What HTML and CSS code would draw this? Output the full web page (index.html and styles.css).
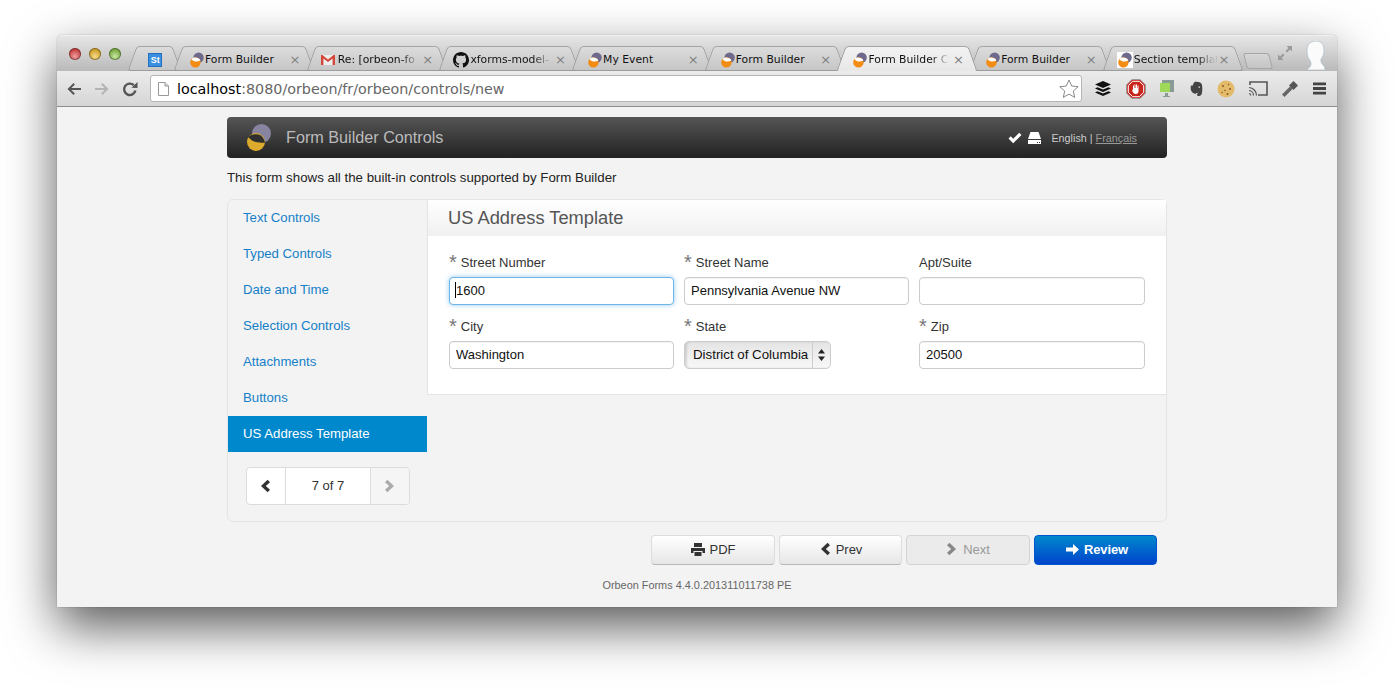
FILE: index.html
```html
<!DOCTYPE html>
<html lang="en">
<head>
    <meta charset="UTF-8">
    <meta name="viewport" content="width=device-width, initial-scale=1.0">
    <title>Form Builder Controls</title>
    <link rel="stylesheet" href="styles.css">
</head>
<body>
    <svg class="defs" width="0" height="0">
        <symbol id="orbeon" viewBox="0 0 14 16">
            <circle cx="8.6" cy="5.6" r="5.2" fill="#6f6a8c"/>
            <circle cx="5.4" cy="10.4" r="5.2" fill="#f28c13"/>
            <path d="M1.6 7.2 C3.4 9.6 7 10.4 10.4 8.4 C9.4 6.4 7 5.4 4.6 5.6 C3.2 5.8 2.2 6.4 1.6 7.2Z" fill="#fff"/>
        </symbol>
        <symbol id="chev-left" viewBox="0 0 12 14"><path d="M8.6 0.8 L11 3.2 L6.8 7 L11 10.8 L8.6 13.2 L2 7Z"/></symbol>
        <symbol id="chev-right" viewBox="0 0 12 14"><path d="M3.4 0.8 L1 3.2 L5.2 7 L1 10.8 L3.4 13.2 L10 7Z"/></symbol>
    </svg>

    <div class="window">
        <div class="titlebar">
            <div class="lights">
                <span class="light red"></span>
                <span class="light yellow"></span>
                <span class="light green"></span>
            </div>
            <div class="tabs">
                <div class="tab pinned"><span class="fav-st">St</span></div>
                <div class="tab">
                    <svg class="fav"><use href="#orbeon"/></svg>
                    <span class="tab-label">Form Builder</span><span class="tab-x">×</span>
                </div>
                <div class="tab">
                    <svg class="fav gmail" viewBox="0 0 14 14"><path d="M0 2h14v10h-14z" fill="#eee"/><path d="M0 2v10h2.4V5.4L7 9l4.6-3.6V12H14V2h-1.4L7 6.6 1.4 2z" fill="#d44638"/></svg>
                    <span class="tab-label fade">Re: [orbeon-fo</span><span class="tab-x">×</span>
                </div>
                <div class="tab">
                    <svg class="fav big" viewBox="0 0 16 16"><path d="M8 0C3.6 0 0 3.6 0 8c0 3.5 2.3 6.5 5.5 7.6.4.1.5-.2.5-.4v-1.4c-2.2.5-2.7-1-2.7-1-.4-.9-.9-1.200-.9-1.200-.7-.5.100-.5.100-.5.800.1 1.200.8 1.200.8.700 1.200 1.900.9 2.300.7.100-.5.300-.9.500-1.100-1.800-.2-3.600-.9-3.600-4 0-.9.300-1.600.800-2.100-.1-.2-.4-1 .1-2.100 0 0 .7-.2 2.200.8.600-.2 1.300-.3 2-.3s1.400.1 2 .3c1.500-1 2.200-.8 2.200-.8.400 1.100.2 1.900.1 2.100.5.600.8 1.300.8 2.100 0 3.100-1.900 3.700-3.700 3.900.3.300.6.800.6 1.500v2.200c0 .2.100.5.600.4C13.700 14.500 16 11.500 16 8c0-4.400-3.600-8-8-8z" fill="#111"/></svg>
                    <span class="tab-label fade">xforms-model-</span><span class="tab-x">×</span>
                </div>
                <div class="tab">
                    <svg class="fav"><use href="#orbeon"/></svg>
                    <span class="tab-label">My Event</span><span class="tab-x">×</span>
                </div>
                <div class="tab">
                    <svg class="fav"><use href="#orbeon"/></svg>
                    <span class="tab-label">Form Builder</span><span class="tab-x">×</span>
                </div>
                <div class="tab active">
                    <svg class="fav"><use href="#orbeon"/></svg>
                    <span class="tab-label fade">Form Builder C</span><span class="tab-x">×</span>
                </div>
                <div class="tab">
                    <svg class="fav"><use href="#orbeon"/></svg>
                    <span class="tab-label">Form Builder</span><span class="tab-x">×</span>
                </div>
                <div class="tab">
                    <svg class="fav big white"><use href="#orbeon"/></svg>
                    <span class="tab-label fade">Section templat</span><span class="tab-x">×</span>
                </div>
                <div class="new-tab"></div>
            </div>
            <svg class="fullscreen" viewBox="0 0 16 16" width="16" height="16">
                <path d="M1 15V9.500L3 11.500 6 8.500 7.500 10 4.500 13 6.500 15Z M15 1V6.500L13 4.500 10 7.500 8.500 6 11.500 3 9.500 1Z" fill="#9a9a9a"/>
            </svg>
            <svg class="profile" viewBox="0 0 20 29" width="20" height="29">
                <path d="M2 9C2 3 6 0 11 0C16 0 19 3 19 9C19 13 18 16 16 18C15.600 20 16 22 19 25C20 26 20 29 20 29H2C3 27 6 26 6 23C6 21 5.500 20 4 18C2.500 16 2 13 2 9Z" fill="#fbfbfb" stroke="#a9bcc6" stroke-width="0.7"/>
            </svg>
        </div>

        <div class="toolbar">
            <svg class="nav-btn" viewBox="0 0 16 14" width="16" height="14"><path d="M7.500 1L1.500 7l6 6 1.400-1.400L5.300 8H15V6H5.300l3.600-3.600z" fill="#555"/></svg>
            <svg class="nav-btn" viewBox="0 0 16 14" width="16" height="14"><path d="M8.500 1l6 6-6 6-1.400-1.400L10.700 8H1V6h9.700L7.100 2.400z" fill="#b4b4b4"/></svg>
            <svg class="nav-btn" viewBox="0 0 16 16" width="16" height="16"><path d="M13.400 9.500A5.700 5.700 0 1 1 11.800 4.200" fill="none" stroke="#555" stroke-width="2.400"/><path d="M9.500 6.800L15.500 7V1z" fill="#555"/></svg>
            <div class="location">
                <svg viewBox="0 0 11 14" width="11" height="14"><path d="M.5.500h6.500l3.500 3.500v9.500H.5z" fill="#fff" stroke="#999"/><path d="M7 .500V4h3.500" fill="#ddd" stroke="#999"/></svg>
                <span class="url"><b>localhost</b>:8080/orbeon/fr/orbeon/controls/new</span>
                <svg class="star" viewBox="0 0 20 19" width="20" height="19"><path d="M10 1l2.700 6 6.500.7-4.900 4.300 1.400 6.400L10 15.100l-5.700 3.300 1.400-6.400L.8 7.700l6.500-.7z" fill="#fff" stroke="#8a8a8a"/></svg>
            </div>
            <div class="extensions">
                <svg viewBox="0 0 18 18" width="18" height="18"><path d="M9 1l8 3.500-8 3.500-8-3.500z M3.500 7.200L9 9.600l5.500-2.400L17 8.400 9 12 1 8.400z M3.500 11.200L9 13.600l5.500-2.400L17 12.400 9 16 1 12.400z" fill="#111"/></svg>
                <svg viewBox="0 0 20 20" width="20" height="20"><path d="M6 .500h8L19.500 6v8L14 19.500H6L.500 14V6z" fill="#c8261c" stroke="#999"/><path d="M6.700 2.300h6.600l4.400 4.400v6.600l-4.400 4.400H6.700l-4.400-4.400V6.700z" fill="none" stroke="#fff"/><path d="M7 10V6.500h1V9h.5V5.500h1V9h.5V5.500h1V9h.5V6.500h1V12c0 2-1 3-3 3-1.500 0-2-1-3-2.500L6 10.500l1 .5z" fill="#fff"/></svg>
                <svg viewBox="0 0 17 20" width="17" height="20"><path d="M3 1h12v12H3z" fill="#8a9a94"/><path d="M1 4h10v9H1z" fill="#9fd95a"/><path d="M6 14h3v3H6zM4 17h7v1H4z" fill="#8a9a94"/></svg>
                <svg viewBox="0 0 13 16" width="13" height="16"><path d="M3 2.500L5 .800c3.500-.3 6.500.2 7 3.200.500 3 .500 7-.5 9.500-1 1.800-4 2-4.500.5-.2-1 .3-2 1.500-1.800-1-.5-2.500-.2-3 .8C3.500 12 1 11.500.700 7.500c0-1 0-2.500.3-3h2z" fill="#444"/><path d="M3.400 3.300V1.600L1.700 3.300z M8.500 5.500h1.500v1.200H8.500z" fill="#ddd"/></svg>
                <svg viewBox="0 0 18 18" width="18" height="18"><circle cx="9" cy="9" r="8.500" fill="#e4bb6a"/><circle cx="6" cy="6" r="1" fill="#8a5a24"/><circle cx="11.500" cy="4.500" r=".8" fill="#8a5a24"/><circle cx="13" cy="9" r="1" fill="#8a5a24"/><circle cx="8" cy="10.500" r=".8" fill="#8a5a24"/><circle cx="5" cy="12.500" r=".8" fill="#8a5a24"/><circle cx="10.500" cy="14" r="1" fill="#8a5a24"/></svg>
                <svg viewBox="0 0 19 15" width="19" height="15"><path d="M1 4V1h17v13H9" fill="none" stroke="#555" stroke-width="1.600"/><path d="M0 6.500a8 8 0 0 1 7.500 8M0 9.500a5 5 0 0 1 4.500 5M0 12.500a2 2 0 0 1 1.800 2" fill="none" stroke="#555" stroke-width="1.200"/></svg>
                <svg viewBox="0 0 18 18" width="18" height="18"><path d="M9 6.500L1 14.500 3.500 17l8-8z" fill="#666"/><path d="M8 5.500L12.500 1 17 5.500 12.500 10z" fill="#555"/></svg>
                <svg viewBox="0 0 13 13" width="13" height="13"><path d="M0 .500h13v2.800H0zM0 5.100h13v2.800H0zM0 9.700h13v2.800H0z" fill="#444"/></svg>
            </div>
        </div>

        <div class="page">
            <div class="app-bar">
                <svg class="app-logo" viewBox="0 0 24 27" width="24" height="27">
                    <circle cx="14.500" cy="9.500" r="9.500" fill="#88849f"/>
                    <circle cx="9" cy="18" r="9" fill="#dcaa2c"/>
                    <path d="M1.300 13 C4 10 10 9.500 14 11.500 C16 13 17.500 16 18 18.500 C12 19.500 5 18 1.300 13Z" fill="#2f2f2f"/>
                </svg>
                <span class="app-title">Form Builder Controls</span>
                <svg class="bar-icon" viewBox="0 0 14 12" width="14" height="12"><path d="M0.500 6.500L2.800 4.300 5.200 6.700 11.200 .700 13.500 3 5.200 11.300z" fill="#fff"/></svg>
                <svg class="bar-icon" viewBox="0 0 13 12" width="13" height="12"><path d="M2.500 0h8L13 7H0z M0 8h13v4H0z" fill="#fff"/><path d="M9 10h1v1H9zM11 10h1v1h-1z" fill="#333"/></svg>
                <span class="lang">English | <a href="#">Français</a></span>
            </div>

            <p class="intro">This form shows all the built-in controls supported by Form Builder</p>

            <div class="panel">
                <div class="sidebar">
                    <a class="nav-item" href="#">Text Controls</a>
                    <a class="nav-item" href="#">Typed Controls</a>
                    <a class="nav-item" href="#">Date and Time</a>
                    <a class="nav-item" href="#">Selection Controls</a>
                    <a class="nav-item" href="#">Attachments</a>
                    <a class="nav-item" href="#">Buttons</a>
                    <a class="nav-item current" href="#">US Address Template</a>
                    <div class="pager">
                        <span class="pager-cell prev"><svg width="12" height="14"><use href="#chev-left"/></svg></span>
                        <span class="pager-cell count">7 of 7</span>
                        <span class="pager-cell next"><svg width="12" height="14"><use href="#chev-right"/></svg></span>
                    </div>
                </div>
                <div class="content">
                    <h3 class="section-title">US Address Template</h3>
                    <div class="section-body">
                        <div class="field">
                            <label><i>*</i>Street Number</label>
                            <div class="input-wrap">
                                <input class="focused" type="text" value="1600">
                                <span class="caret"></span>
                            </div>
                        </div>
                        <div class="field">
                            <label><i>*</i>Street Name</label>
                            <input type="text" value="Pennsylvania Avenue NW">
                        </div>
                        <div class="field">
                            <label>Apt/Suite</label>
                            <input type="text" value="">
                        </div>
                        <div class="field">
                            <label><i>*</i>City</label>
                            <input type="text" value="Washington">
                        </div>
                        <div class="field">
                            <label><i>*</i>State</label>
                            <div class="select">
                                <span class="select-value">District of Columbia</span>
                                <span class="select-arrows">
                                    <svg viewBox="0 0 7 12" width="7" height="12"><path d="M3.500 0L7 4.500H0zM3.500 12L0 7.500h7z" fill="#222"/></svg>
                                </span>
                            </div>
                        </div>
                        <div class="field">
                            <label><i>*</i>Zip</label>
                            <input type="text" value="20500">
                        </div>
                    </div>
                </div>
            </div>

            <div class="actions">
                <button class="btn wide" type="button">
                    <svg viewBox="0 0 14 13" width="14" height="13"><path d="M3 0h8v4H3zM0 5h14v5h-2.500V8h-9v2H0zM3.500 9h7v4h-7z" fill="#333"/></svg>PDF
                </button>
                <button class="btn" type="button"><svg width="12" height="14"><use href="#chev-left"/></svg>Prev</button>
                <button class="btn wide disabled" type="button"><svg width="12" height="14"><use href="#chev-right"/></svg>Next</button>
                <button class="btn primary" type="button">
                    <svg viewBox="0 0 13 11" width="13" height="11"><path d="M7 0l6 5.500L7 11V7.500H0v-4h7z" fill="#fff"/></svg>Review
                </button>
            </div>

            <p class="version">Orbeon Forms 4.4.0.201311011738 PE</p>
        </div>
    </div>
</body>
</html>
```

FILE: styles.css
```css
html, body {
    height: 100%;
}
body {
    margin: 0;
    padding: 35px 0 0 57px;
    box-sizing: border-box;
    background-color: #fff;
    overflow: hidden;
    font-family: "Liberation Sans", Arial, sans-serif;
    font-size: 13px;
    color: #333;
}
.defs {
    position: absolute;
}
.window {
    width: 1280px;
    height: 572px;
    border-radius: 5px 5px 0 0;
    background-color: #f3f3f3;
    box-shadow: 0 20px 50px rgba(0, 0, 0, 0.65), 0 0 1px rgba(0, 0, 0, 0.6);
    display: flex;
    flex-direction: column;
}

/* browser chrome */
.titlebar {
    height: 36px;
    box-sizing: border-box;
    display: flex;
    background: linear-gradient(#e6e6e6, #b9b9b9);
    border-top: 1px solid #f0f0f0;
    border-radius: 5px 5px 0 0;
    position: relative;
}
.lights {
    width: 75px;
    padding: 12px 0 0 12px;
    box-sizing: border-box;
    display: flex;
    gap: 8px;
}
.light {
    width: 12px;
    height: 12px;
    border-radius: 50%;
    box-shadow: inset 0 0 0 1px rgba(0, 0, 0, 0.35);
}
.red { background: radial-gradient(circle at 50% 70%, #f0a0a0, #c23a3a 70%); }
.yellow { background: radial-gradient(circle at 50% 70%, #f6dc8a, #c99a22 70%); }
.green { background: radial-gradient(circle at 50% 70%, #c8e8a0, #74a53c 70%); }

.tabs {
    display: flex;
    padding-top: 10px;
    position: relative;
    z-index: 0;
}
.tab {
    width: 118px;
    height: 25px;
    margin: 0 7.35px;
    position: relative;
    box-sizing: border-box;
    display: flex;
    align-items: center;
    gap: 1px;
    padding: 2px 2px 0 5px;
    background: linear-gradient(#dcdcdc, #c6c6c6);
    border-top: 1px solid #a6a6a6;
    border-bottom: 1px solid #9c9c9c;
    font-family: "DejaVu Sans", sans-serif;
    font-size: 10.8px;
    color: #111;
}
.tab::before,
.tab::after {
    content: "";
    position: absolute;
    top: -1px;
    bottom: -1px;
    width: 14px;
    z-index: -1;
    background: linear-gradient(#dcdcdc, #c6c6c6);
    border-top: 1px solid #a6a6a6;
    border-bottom: 1px solid #9c9c9c;
    box-sizing: border-box;
}
.tab::before {
    left: -7px;
    border-left: 1px solid #9a9a9a;
    border-radius: 4px 0 0 3px;
    transform: skewX(-20deg);
}
.tab::after {
    right: -7px;
    border-right: 1px solid #9a9a9a;
    border-radius: 0 4px 3px 0;
    transform: skewX(20deg);
}
.tab.pinned {
    width: 31px;
    padding-left: 9px;
}
.tab.active {
    z-index: 1;
    background: linear-gradient(#f2f2f2, #e8e8e8);
    border-bottom-color: #e8e8e8;
}
.tab.active::before,
.tab.active::after {
    background: linear-gradient(#f2f2f2, #e8e8e8);
    border-bottom-color: #e8e8e8;
}
.fav {
    width: 14px;
    height: 16px;
    flex-shrink: 0;
}
.fav.gmail {
    margin-left: -2px;
    margin-right: 2px;
}
.fav.big {
    width: 16px;
    height: 16px;
    margin-left: -2px;
}
.fav.white {
    background: #fff;
}
.fav-st {
    width: 14px;
    height: 14px;
    background: #3b8fe0;
    border: 1px solid #2470c0;
    box-sizing: border-box;
    color: #fff;
    font: bold 9px/13px "Liberation Sans", sans-serif;
    text-align: center;
}
.tab-label {
    flex: 1;
    min-width: 0;
    white-space: nowrap;
}
.tab-label.fade {
    -webkit-mask-image: linear-gradient(to right, #000 76%, rgba(0, 0, 0, 0.1) 96%);
    mask-image: linear-gradient(to right, #000 76%, rgba(0, 0, 0, 0.1) 96%);
}
.tab-x {
    width: 12px;
    text-align: center;
    color: #808080;
    font-size: 13px;
    line-height: 14px;
}
.new-tab {
    width: 24px;
    height: 14px;
    margin: 7px 0 0 6px;
    border: 1px solid #a6a6a6;
    border-radius: 3px;
    background: linear-gradient(#d6d6d6, #c4c4c4);
    transform: skewX(15deg);
}
.fullscreen {
    position: absolute;
    left: 1220px;
    top: 9px;
}
.profile {
    position: absolute;
    left: 1248px;
    top: 5px;
}
.toolbar {
    height: 36px;
    box-sizing: border-box;
    display: flex;
    align-items: center;
    padding: 0 11px 0 9px;
    gap: 12px;
    background: linear-gradient(#ebebeb, #d6d6d6);
    border-bottom: 1px solid #8d8d8d;
}
.location {
    width: 932px;
    height: 27px;
    box-sizing: border-box;
    display: flex;
    align-items: center;
    gap: 8px;
    padding: 0 2px 0 7px;
    background: #fff;
    border: 1px solid #b5b5b5;
    border-radius: 3px;
    font-family: "DejaVu Sans", sans-serif;
    font-size: 14.3px;
    color: #666;
}
.url {
    flex: 1;
    white-space: nowrap;
}
.url b {
    font-weight: normal;
    color: #000;
}
.extensions {
    flex: 1;
    display: flex;
    align-items: center;
    justify-content: space-between;
}

/* page */
.page {
    flex: 1;
    width: 940px;
    margin: 0 auto;
    padding-top: 10px;
}
.app-bar {
    height: 41px;
    box-sizing: border-box;
    display: flex;
    align-items: center;
    padding: 0 30px 0 20px;
    background: linear-gradient(#555, #222);
    border-radius: 4px;
}
.app-logo {
    margin-right: 15px;
}
.app-title {
    flex: 1;
    font-size: 16.2px;
    color: #bbb;
}
.bar-icon {
    margin-right: 6px;
}
.lang {
    margin-left: 4px;
    font-size: 10.8px;
    color: #ccc;
}
.lang a {
    color: #999;
}
.intro {
    margin: 12px 0 14px;
    line-height: 15px;
    font-size: 13.3px;
    color: #222;
}
.panel {
    height: 323px;
    box-sizing: border-box;
    display: flex;
    border: 1px solid #e4e4e4;
    border-radius: 6px;
}
.sidebar {
    width: 199px;
    flex-shrink: 0;
}
.nav-item {
    display: block;
    height: 36px;
    line-height: 35px;
    padding-left: 15px;
    font-size: 13.2px;
    color: #1580c8;
    text-decoration: none;
}
.nav-item.current {
    background-color: #0088cc;
    color: #fff;
}
.pager {
    display: flex;
    width: 164px;
    height: 38px;
    box-sizing: border-box;
    margin: 15px 0 0 18px;
    background: #fff;
    border: 1px solid #dcdcdc;
    border-radius: 4px;
}
.pager-cell {
    display: flex;
    align-items: center;
    justify-content: center;
}
.prev {
    width: 39px;
    padding-right: 2px;
    box-sizing: border-box;
    fill: #333;
    border-right: 1px solid #dcdcdc;
}
.count {
    flex: 1;
    padding-bottom: 2px;
}
.next {
    width: 38px;
    fill: #aaa;
    background: #f5f5f5;
    border-left: 1px solid #dcdcdc;
    border-radius: 0 4px 4px 0;
}
.content {
    flex: 1;
    align-self: flex-start;
    border-left: 1px solid #e4e4e4;
    border-bottom: 1px solid #e4e4e4;
}
.section-title {
    margin: 0;
    height: 36px;
    line-height: 36px;
    padding-left: 20px;
    font-size: 18.3px;
    font-weight: normal;
    color: #555;
    background: linear-gradient(#fff, #f0f0f0);
}
.section-body {
    height: 158px;
    box-sizing: border-box;
    background: #fff;
    padding: 18px 21px 0 21px;
    display: grid;
    grid-template-columns: 225px 225px 226px;
    column-gap: 10px;
    grid-auto-rows: 64px;
    align-content: start;
}
.field label {
    display: block;
    height: 23px;
    line-height: 17px;
    color: #333;
}
.field label i {
    font-style: normal;
    font-size: 20px;
    line-height: 17px;
    color: #777;
    margin-right: 4px;
    vertical-align: -2px;
}
.field input {
    display: block;
    width: 100%;
    height: 28px;
    box-sizing: border-box;
    padding: 0 6px 2px;
    border: 1px solid #ccc;
    border-radius: 4px;
    background: #fff;
    font: 13px "Liberation Sans", sans-serif;
    color: #111;
    box-shadow: inset 0 1px 1px rgba(0, 0, 0, 0.05);
}
.input-wrap {
    position: relative;
}
.field input.focused {
    border-color: #6fb6e8;
    box-shadow: 0 0 5px rgba(82, 168, 236, 0.6);
}
.caret {
    position: absolute;
    left: 6px;
    top: 5px;
    width: 1px;
    height: 16px;
    background: #000;
}
.select {
    display: flex;
    width: 147px;
    height: 28px;
    box-sizing: border-box;
    border: 1px solid #ccc;
    border-radius: 5px;
    background: linear-gradient(#e4e4e4, #f8f8f8);
    box-shadow: inset 2px 0 2px rgba(0, 0, 0, 0.12);
    font-size: 13.3px;
    color: #111;
}
.select-value {
    flex: 1;
    line-height: 26px;
    padding-left: 8px;
    white-space: nowrap;
}
.select-arrows {
    width: 17px;
    display: flex;
    align-items: center;
    justify-content: center;
    border-left: 1px solid #ccc;
}
.actions {
    display: flex;
    justify-content: flex-end;
    gap: 4px;
    padding: 13px 10px 0 0;
}
.btn {
    width: 123px;
    height: 30px;
    display: flex;
    align-items: center;
    justify-content: center;
    gap: 5px;
    padding: 0 0 2px;
    background: linear-gradient(#fff, #e6e6e6);
    border: 1px solid #ddd;
    border-bottom-color: #b8b8b8;
    border-radius: 4px;
    font: 13px "Liberation Sans", sans-serif;
    color: #333;
    fill: #333;
}
.btn.wide {
    width: 124px;
}
.btn.disabled {
    background: #ebebeb;
    border-color: #d4d4d4;
    color: #999;
    fill: #888;
}
.btn.primary {
    padding-left: 3px;
    background: linear-gradient(#0088cc, #0044cc);
    border: 1px solid #0055cc;
    color: #fff;
    font-weight: bold;
    letter-spacing: -0.1px;
}
.version {
    margin: 14px 0 0;
    text-align: center;
    font-size: 10.9px;
    line-height: 13px;
    color: #666;
}
```
